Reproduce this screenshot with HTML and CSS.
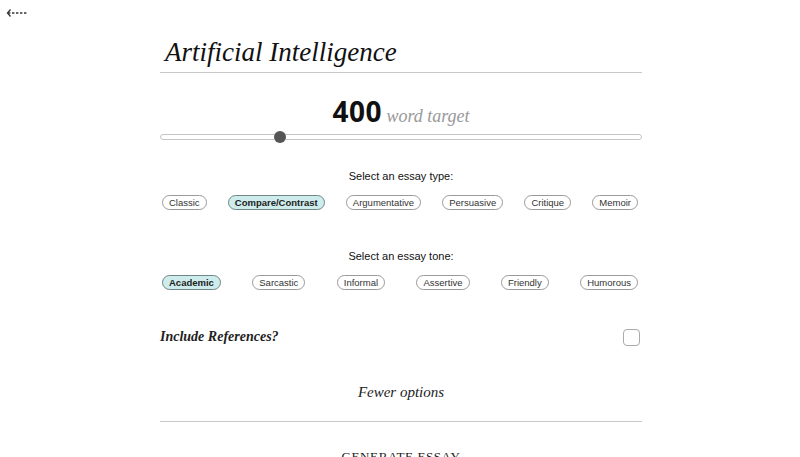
FILE: index.html
```html
<!DOCTYPE html>
<html lang="en">
<head>
<meta charset="utf-8">
<title>Essay options</title>
<link rel="stylesheet" href="styles.css">
</head>
<body>
<header class="topbar">
  <a class="back" href="#" aria-label="Back">
    <svg width="22" height="10" viewBox="0 0 22 10">
      <path d="M4.5 1.5 L1.5 5 L4.5 8.5" fill="none" stroke="#333" stroke-width="1.3"/>
      <path d="M2 5 H22" fill="none" stroke="#333" stroke-width="1.3" stroke-dasharray="2.4 1.6"/>
    </svg>
  </a>
</header>
<main class="page">
  <h1 class="title">Artificial Intelligence</h1>

  <div class="target"><span class="count">400</span> <span class="unit">word target</span></div>
  <input class="slider" type="range" min="0" max="1650" value="400" aria-label="Word target">

  <section class="group">
    <p class="label">Select an essay type:</p>
    <div class="chips">
      <button class="chip">Classic</button>
      <button class="chip active">Compare/Contrast</button>
      <button class="chip">Argumentative</button>
      <button class="chip">Persuasive</button>
      <button class="chip">Critique</button>
      <button class="chip">Memoir</button>
    </div>
  </section>

  <section class="group tone">
    <p class="label">Select an essay tone:</p>
    <div class="chips">
      <button class="chip active">Academic</button>
      <button class="chip">Sarcastic</button>
      <button class="chip">Informal</button>
      <button class="chip">Assertive</button>
      <button class="chip">Friendly</button>
      <button class="chip">Humorous</button>
    </div>
  </section>

  <label class="refs">
    <span class="refs-text">Include References?</span>
    <span class="box"></span>
  </label>

  <div class="fewer">Fewer options</div>

  <div class="generate">GENERATE ESSAY</div>
</main>
</body>
</html>
```
FILE: styles.css
```css
* { box-sizing: border-box; }
html, body { margin: 0; padding: 0; background: #fff; }
body { font-family: "Liberation Sans", Arial, sans-serif; color: #111; overflow: hidden; }

.topbar { height: 36px; padding: 8px 0 0 6px; }
.back { display: block; width: 22px; height: 10px; }
.back svg { display: block; }

.page { width: 482px; margin: 0 0 0 160px; }

.title {
  margin: 0;
  padding: 0 0 4px 5px;
  font-family: "Liberation Serif", "Times New Roman", serif;
  font-style: italic;
  font-weight: 400;
  font-size: 27px;
  line-height: 32px;
  color: #111;
  border-bottom: 1px solid #c8c8c8;
}

.target {
  margin-top: 23px;
  text-align: center;
  line-height: 30px;
  height: 30px;
}
.count {
  font-family: "Open Sans", sans-serif;
  font-weight: 700;
  font-size: 28px;
  letter-spacing: 0.5px;
  color: #111;
}
.unit {
  font-family: "Liberation Serif", serif;
  font-style: italic;
  font-size: 18px;
  color: #999;
}

.slider {
  -webkit-appearance: none;
  appearance: none;
  display: block;
  width: 482px;
  height: 12px;
  margin: 5px 0 0;
  padding: 0;
  background: transparent;
}
.slider::-webkit-slider-runnable-track {
  height: 6px;
  border: 1px solid #c4c4c4;
  border-radius: 4px;
  background: #fff;
}
.slider::-webkit-slider-thumb {
  -webkit-appearance: none;
  appearance: none;
  width: 12px;
  height: 12px;
  margin-top: -4px;
  border-radius: 50%;
  background: #555;
  border: none;
}

.group { margin-top: 25px; }
.group.tone { margin-top: 38px; }
.label {
  margin: 0;
  text-align: center;
  font-size: 11px;
  line-height: 16px;
  color: #111;
}
.chips {
  display: flex;
  justify-content: space-between;
  padding: 0 4px 0 2px;
  margin-top: 11px;
}
.chip {
  font-family: "Liberation Sans", Arial, sans-serif;
  font-size: 9.5px;
  line-height: 13px;
  height: 15px;
  padding: 0 6px;
  border: 1px solid #9a9a9a;
  border-radius: 8px;
  background: #fff;
  color: #333;
}
.chip.active {
  background: #cdeceb;
  border-color: #6f8685;
  color: #222;
  font-weight: 700;
}

.refs {
  display: flex;
  justify-content: space-between;
  align-items: center;
  margin-top: 37px;
  height: 20px;
}
.refs-text {
  font-family: "Liberation Serif", serif;
  font-style: italic;
  font-weight: 700;
  font-size: 14px;
  color: #222;
}
.box {
  width: 17px;
  height: 17px;
  margin-right: 2px;
  border: 1px solid #aaa;
  border-radius: 4px;
}

.fewer {
  margin-top: 35px;
  padding-bottom: 19px;
  text-align: center;
  font-family: "Liberation Serif", serif;
  font-style: italic;
  font-size: 15px;
  line-height: 20px;
  color: #222;
  border-bottom: 1px solid #c8c8c8;
}

.generate {
  margin-top: 27px;
  text-align: center;
  font-family: "Liberation Serif", serif;
  font-size: 13px;
  letter-spacing: 0.6px;
  color: #222;
}
```
